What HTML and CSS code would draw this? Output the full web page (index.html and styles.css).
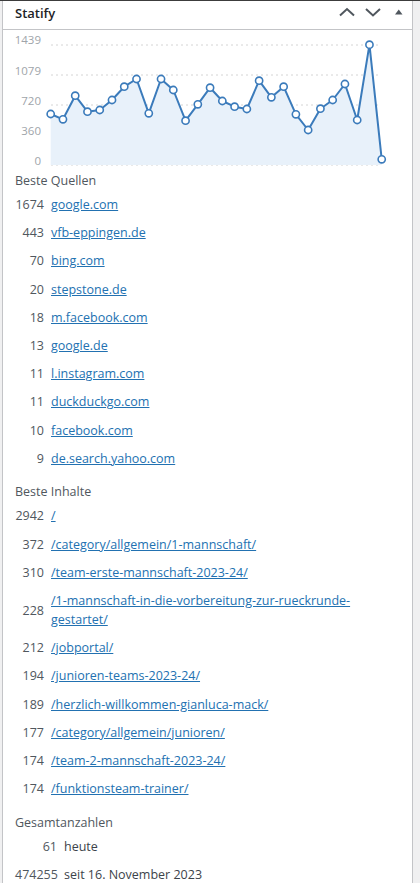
FILE: index.html
```html
<!DOCTYPE html>
<html lang="de">
<head>
<meta charset="utf-8">
<title>Statify</title>
<link rel="stylesheet" href="styles.css">
</head>
<body>
<div class="topline"></div>
<div class="panel">
  <div class="panel-head">
    <h2 class="title">Statify</h2>
    <div class="controls">
      <button class="ctl" aria-label="Nach oben"><svg width="26" height="28" viewBox="0 0 26 28"><polyline points="6,14.5 13,8 20,14.5" fill="none" stroke="#50575e" stroke-width="2"/></svg></button>
      <button class="ctl" aria-label="Nach unten"><svg width="26" height="28" viewBox="0 0 26 28"><polyline points="6,8 13,14.5 20,8" fill="none" stroke="#50575e" stroke-width="2"/></svg></button>
      <button class="ctl" aria-label="Umschalten"><svg width="26" height="28" viewBox="0 0 26 28"><polygon points="9,13.5 16.5,13.5 12.75,8.5" fill="#50575e"/></svg></button>
    </div>
  </div>

  <svg class="chart" width="409" height="141" viewBox="3 30 409 141">
    <g class="grid">
      <line x1="51" y1="45" x2="381" y2="45"/>
      <line x1="51" y1="75" x2="381" y2="75"/>
      <line x1="51" y1="105" x2="381" y2="105"/>
      <line x1="51" y1="135" x2="381" y2="135"/>
      <line x1="51" y1="165" x2="381" y2="165"/>
    </g>
    <g class="axis">
      <text x="41" y="44">1439</text>
      <text x="41" y="74.5">1079</text>
      <text x="41" y="104.5">720</text>
      <text x="41" y="134.5">360</text>
      <text x="41" y="164.5">0</text>
    </g>
    <polygon class="area" points="50.7,165 50.7,114 62.96,119.3 75.22,95.7 87.48,111.7 99.74,110 112,100 124.26,86.7 136.52,79 148.78,113.3 161.04,79 173.3,90 185.56,120.7 197.82,104.3 210.08,87.7 222.34,101 234.6,106.7 246.86,109 259.12,80.7 271.38,97.3 283.64,86.7 295.9,114.3 308.16,130 320.42,108.7 332.68,100 344.94,84 357.2,120 369.46,44.7 381.72,159.3 381.72,165"/>
    <polyline class="line" points="50.7,114 62.96,119.3 75.22,95.7 87.48,111.7 99.74,110 112,100 124.26,86.7 136.52,79 148.78,113.3 161.04,79 173.3,90 185.56,120.7 197.82,104.3 210.08,87.7 222.34,101 234.6,106.7 246.86,109 259.12,80.7 271.38,97.3 283.64,86.7 295.9,114.3 308.16,130 320.42,108.7 332.68,100 344.94,84 357.2,120 369.46,44.7 381.72,159.3"/>
    <g class="dots">
      <circle cx="50.7" cy="114" r="3.6"/>
      <circle cx="62.96" cy="119.3" r="3.6"/>
      <circle cx="75.22" cy="95.7" r="3.6"/>
      <circle cx="87.48" cy="111.7" r="3.6"/>
      <circle cx="99.74" cy="110" r="3.6"/>
      <circle cx="112" cy="100" r="3.6"/>
      <circle cx="124.26" cy="86.7" r="3.6"/>
      <circle cx="136.52" cy="79" r="3.6"/>
      <circle cx="148.78" cy="113.3" r="3.6"/>
      <circle cx="161.04" cy="79" r="3.6"/>
      <circle cx="173.3" cy="90" r="3.6"/>
      <circle cx="185.56" cy="120.7" r="3.6"/>
      <circle cx="197.82" cy="104.3" r="3.6"/>
      <circle cx="210.08" cy="87.7" r="3.6"/>
      <circle cx="222.34" cy="101" r="3.6"/>
      <circle cx="234.6" cy="106.7" r="3.6"/>
      <circle cx="246.86" cy="109" r="3.6"/>
      <circle cx="259.12" cy="80.7" r="3.6"/>
      <circle cx="271.38" cy="97.3" r="3.6"/>
      <circle cx="283.64" cy="86.7" r="3.6"/>
      <circle cx="295.9" cy="114.3" r="3.6"/>
      <circle cx="308.16" cy="130" r="3.6"/>
      <circle cx="320.42" cy="108.7" r="3.6"/>
      <circle cx="332.68" cy="100" r="3.6"/>
      <circle cx="344.94" cy="84" r="3.6"/>
      <circle cx="357.2" cy="120" r="3.6"/>
      <circle cx="369.46" cy="44.7" r="3.6"/>
      <circle cx="381.72" cy="159.3" r="3.6"/>
    </g>
  </svg>

  <div class="body">
    <h3 class="section">Beste Quellen</h3>
    <div class="list">
      <span class="num">1674</span><a href="#">google.com</a>
      <span class="num">443</span><a href="#">vfb-eppingen.de</a>
      <span class="num">70</span><a href="#">bing.com</a>
      <span class="num">20</span><a href="#">stepstone.de</a>
      <span class="num">18</span><a href="#">m.facebook.com</a>
      <span class="num">13</span><a href="#">google.de</a>
      <span class="num">11</span><a href="#">l.instagram.com</a>
      <span class="num">11</span><a href="#">duckduckgo.com</a>
      <span class="num">10</span><a href="#">facebook.com</a>
      <span class="num">9</span><a href="#">de.search.yahoo.com</a>
    </div>

    <h3 class="section section-gap">Beste Inhalte</h3>
    <div class="list">
      <span class="num">2942</span><a href="#">/</a>
      <span class="num">372</span><a href="#">/category/allgemein/1-mannschaft/</a>
      <span class="num">310</span><a href="#">/team-erste-mannschaft-2023-24/</a>
      <span class="num">228</span><a href="#">/1-mannschaft-in-die-vorbereitung-zur-rueckrunde-gestartet/</a>
      <span class="num">212</span><a href="#">/jobportal/</a>
      <span class="num">194</span><a href="#">/junioren-teams-2023-24/</a>
      <span class="num">189</span><a href="#">/herzlich-willkommen-gianluca-mack/</a>
      <span class="num">177</span><a href="#">/category/allgemein/junioren/</a>
      <span class="num">174</span><a href="#">/team-2-mannschaft-2023-24/</a>
      <span class="num">174</span><a href="#">/funktionsteam-trainer/</a>
    </div>

    <h3 class="section section-gap">Gesamtanzahlen</h3>
    <div class="list totals">
      <span class="num">61</span><span class="label">heute</span>
      <span class="num">474255</span><span class="label">seit 16. November 2023</span>
    </div>
  </div>
</div>
</body>
</html>
```

FILE: styles.css
```css
html, body {
  margin: 0;
  padding: 0;
}
body {
  background: #f0f0f1;
  font-family: "Open Sans", "Noto Sans", sans-serif;
  font-size: 12.5px;
  color: #3c434a;
}
.topline {
  height: 1px;
  background: #3c3c3c;
}
.panel {
  margin-left: 2px;
  width: 409px;
  background: #fff;
  border-left: 1px solid #c3c4c7;
  border-right: 1px solid #c3c4c7;
  min-height: 882px;
}
.panel-head {
  display: flex;
  justify-content: space-between;
  align-items: flex-start;
  height: 28px;
  border-bottom: 1px solid #c3c4c7;
}
.title {
  margin: 0;
  padding: 1px 0 0 12px;
  font-size: 13px;
  font-weight: 600;
  line-height: 22px;
  color: #1d2327;
}
.controls {
  display: flex;
}
.ctl {
  width: 26px;
  height: 28px;
  padding: 0;
  margin: 0;
  border: 0;
  background: none;
  display: block;
}
.ctl svg {
  display: block;
}
.chart {
  display: block;
}
.grid line {
  stroke: #d4d4d4;
  stroke-width: 1;
  stroke-dasharray: 2 3;
}
.axis text {
  font-family: "Open Sans", "Noto Sans", sans-serif;
  font-size: 11.5px;
  fill: #a0a5aa;
  text-anchor: end;
}
.area {
  fill: #e8f1fa;
  stroke: none;
}
.line {
  fill: none;
  stroke: #3b7bbb;
  stroke-width: 2;
  stroke-linejoin: round;
}
.dots circle {
  fill: #fff;
  stroke: #3b7bbb;
  stroke-width: 1.6;
}
.body {
  padding: 0 12px 0 12px;
}
.section {
  margin: 0;
  font-size: 12.5px;
  font-weight: 400;
  line-height: 19px;
  color: #50575e;
}
.section-gap {
  margin-top: 10px;
}
.list {
  display: grid;
  grid-template-columns: 29px 1fr;
  column-gap: 7px;
  padding-top: 0.5px;
}
.list > * {
  line-height: 19px;
  padding: 4.6px 0;
}
.num {
  text-align: right;
  color: #50575e;
  align-self: center;
}
.list a {
  color: #2271b1;
  text-decoration: underline;
}
.totals {
  grid-template-columns: 42px 1fr;
  padding-top: 0;
}
.totals > * {
  padding: 4.8px 0;
}
.label {
  color: #3c434a;
}
```
